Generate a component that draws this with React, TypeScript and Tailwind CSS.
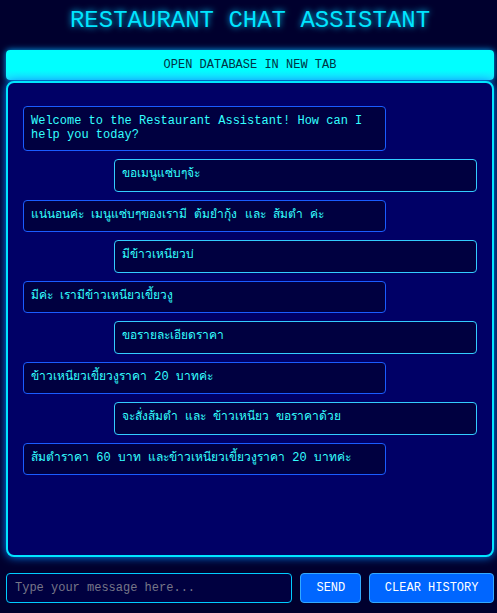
import { type FC } from "react";

type Message = { id: number; from: "bot" | "user"; text: string };

const messages: Message[] = [
    { id: 1, from: "bot", text: "Welcome to the Restaurant Assistant! How can I help you today?" },
    { id: 2, from: "user", text: "ขอเมนูแซ่บๆจ้ะ" },
    { id: 3, from: "bot", text: "แน่นอนค่ะ เมนูแซ่บๆของเรามี ต้มยำกุ้ง และ ส้มตำ ค่ะ" },
    { id: 4, from: "user", text: "มีข้าวเหนียวบ่" },
    { id: 5, from: "bot", text: "มีค่ะ  เรามีข้าวเหนียวเขี้ยวงู" },
    { id: 6, from: "user", text: "ขอรายละเอียดราคา" },
    { id: 7, from: "bot", text: "ข้าวเหนียวเขี้ยวงูราคา 20 บาทค่ะ" },
    { id: 8, from: "user", text: "จะสั่งส้มตำ และ ข้าวเหนียว ขอราคาด้วย" },
    { id: 9, from: "bot", text: "ส้มตำราคา 60 บาท และข้าวเหนียวเขี้ยวงูราคา 20 บาทค่ะ" },
];

// Courier-like stack, Liberation Mono keeps the widths if no slab mono is present
const mono =
    "font-['Courier_New','FreeMono','Nimbus_Mono_PS','Courier_10_Pitch','Liberation_Mono',Tahoma,'DejaVu_Sans',monospace]";

const Bubble: FC<{ msg: Message }> = ({ msg }) => {
    const isUser = msg.from === "user";
    return (
        <div
            className={
                isUser
                    ? "self-end w-[80%] min-h-[32.5px] px-[7px] py-[8px] bg-[#000040] border border-[#33ccff] rounded-[4px] text-[12px] leading-[13.5px] text-[#33ffff]"
                    : "self-start w-[80%] min-h-[32.5px] px-[7px] py-[8px] bg-[#000040] border border-[#1a5cff] rounded-[4px] text-[12px] leading-[13.5px] text-[#33ffff]"
            }
        >
            {msg.text}
        </div>
    );
};

const App: FC = () => {
    return (
        <div className={`w-[497px] h-[613px] bg-[#00002e] pl-[6px] pr-[3px] flex flex-col ${mono}`}>
            {/* header */}
            <h1 className="pt-[7px] pb-[15px] text-center text-[24px] leading-[28px] font-normal text-[#00e5ff] [text-shadow:0_0_6px_#00ccff]">
                RESTAURANT CHAT ASSISTANT
            </h1>

            <button className="h-[30px] w-full rounded-[4px] bg-[linear-gradient(#00ffff_65%,#1ee6ff)] text-[12px] text-[#003344] shadow-[0_0_6px_#00aaff]">
                OPEN DATABASE IN NEW TAB
            </button>

            {/* chat window */}
            <div className="mt-[1px] h-[476px] flex flex-col gap-2 bg-[#000066] border-2 border-[#00e5ff] rounded-[8px] pt-[23px] px-[15px] shadow-[0_0_10px_#0088ff]">
                {messages.map((m) => (
                    <Bubble key={m.id} msg={m} />
                ))}
            </div>

            {/* input row */}
            <div className="mt-[16px] flex gap-2 h-[30px]">
                <input
                    className="w-[287px] h-full px-2 bg-[#000040] border border-[#00ccff] rounded-[4px] text-[12px] text-[#33ffff] placeholder:text-[#777788] outline-none"
                    placeholder="Type your message here..."
                />
                <button className="w-[61px] h-full bg-[#0066ff] border border-[#33aaff] rounded-[4px] text-[12px] text-white">
                    SEND
                </button>
                <button className="w-[125px] h-full bg-[#0066ff] border border-[#33aaff] rounded-[4px] text-[12px] text-white">
                    CLEAR HISTORY
                </button>
            </div>
        </div>
    );
};

export default App;
